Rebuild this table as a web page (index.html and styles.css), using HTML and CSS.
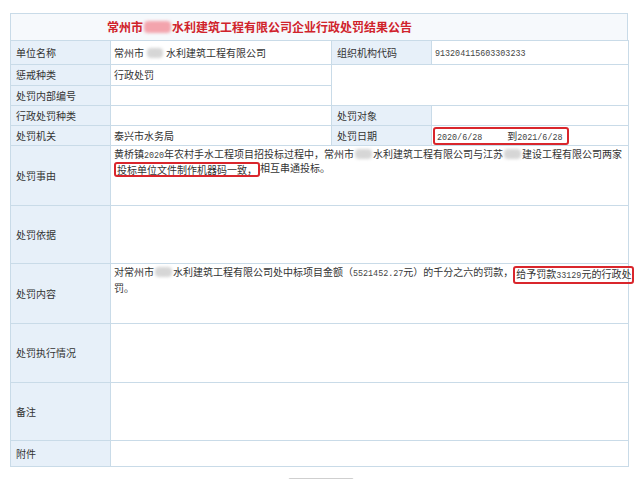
FILE: index.html
```html
<!DOCTYPE html>
<html lang="zh-CN">
<head>
<meta charset="utf-8">
<title>行政处罚结果公告</title>
<link rel="stylesheet" href="styles.css">
</head>
<body>
<div class="page">
  <div class="title">常州市<span class="blur blur-title"></span>水利建筑工程有限公司企业行政处罚结果公告</div>
  <table class="grid">
    <colgroup><col class="c1"><col class="c2"><col class="c3"><col class="c4"></colgroup>
    <tr class="h24">
      <th>单位名称</th>
      <td>常州市<span class="blur blur-s"></span>水利建筑工程有限公司</td>
      <th>组织机构代码</th>
      <td><span class="num">913204115603303233</span></td>
    </tr>
    <tr class="h21">
      <th>惩戒种类</th>
      <td>行政处罚</td>
      <td class="blank" colspan="2" rowspan="2"></td>
    </tr>
    <tr class="h20">
      <th>处罚内部编号</th>
      <td></td>
    </tr>
    <tr class="h20">
      <th>行政处罚种类</th>
      <td></td>
      <th>处罚对象</th>
      <td></td>
    </tr>
    <tr class="h20">
      <th>处罚机关</th>
      <td>泰兴市水务局</td>
      <th>处罚日期</th>
      <td><span class="mark mark-date"><span class="num">2020/6/28</span><span class="gap"></span>到<span class="num">2021/6/28</span></span></td>
    </tr>
    <tr class="h60">
      <th>处罚事由</th>
      <td class="text" colspan="3">黄桥镇<span class="num">2020</span>年农村手水工程项目招投标过程中，常州市<span class="blur blur-m"></span>水利建筑工程有限公司与江苏<span class="blur blur-m"></span>建设工程有限公司两家<br><span class="mark mark-line">投标单位文件制作机器码一致，</span>相互串通投标。</td>
    </tr>
    <tr class="h58">
      <th>处罚依据</th>
      <td class="text" colspan="3"></td>
    </tr>
    <tr class="h60">
      <th>处罚内容</th>
      <td class="text" colspan="3">对常州市<span class="blur blur-m"></span>水利建筑工程有限公司处中标项目金额（<span class="num">5521452.27</span>元）的千分之六的罚款，<span class="mark mark-line">给予罚款<span class="num">33129</span>元的行政处</span><br>罚。</td>
    </tr>
    <tr class="h59">
      <th>处罚执行情况</th>
      <td class="text" colspan="3"></td>
    </tr>
    <tr class="h58">
      <th>备注</th>
      <td class="text" colspan="3"></td>
    </tr>
    <tr class="h26">
      <th>附件</th>
      <td class="text" colspan="3"></td>
    </tr>
  </table>
  <div class="actions"><span class="btn"></span></div>
</div>
</body>
</html>
```

FILE: styles.css
```css
html, body {
  margin: 0;
  padding: 0;
  background: #ffffff;
  overflow: hidden;
}
body {
  font-family: "Noto Sans CJK SC", "Noto Sans", sans-serif;
  font-size: 10px;
  color: #333333;
}
.page {
  padding: 13px 0 0 10px;
  width: 618px;
}
.title {
  box-sizing: border-box;
  height: 27px;
  line-height: 25px;
  border: 1px solid #c9dbe8;
  border-bottom: none;
  background: #f6f9fc;
  padding-left: 96px;
  font-size: 12px;
  font-weight: bold;
  color: #d0232b;
  white-space: nowrap;
}
.grid {
  width: 618px;
  border-collapse: collapse;
  table-layout: fixed;
}
.c1 { width: 100px; }
.c2 { width: 221px; }
.c3 { width: 100px; }
.c4 { width: 197px; }
.grid th,
.grid td {
  border: 1px solid #c9dbe8;
  padding: 0;
  font-weight: normal;
  text-align: left;
  white-space: nowrap;
  overflow: visible;
  line-height: 12px;
}
.grid th {
  background: #e7f0f9;
  padding-left: 5px;
  vertical-align: middle;
  color: #333;
}
.grid td {
  background: #ffffff;
  padding-left: 3px;
  vertical-align: middle;
}
.grid td.text {
  vertical-align: top;
  padding-top: 2px;
  line-height: 12px;
}
.grid td.blank { background: #ffffff; }
.h20 { height: 20px; }
.h21 { height: 21px; }
.h24 { height: 24px; }
.h26 { height: 26px; }
.h58 { height: 58px; }
.h59 { height: 59px; }
.h60 { height: 60px; }
.num {
  font-family: "Liberation Mono", "DejaVu Sans Mono", monospace;
  font-size: 8.4px;
  color: #444;
}
.blur {
  display: inline-block;
  height: 10px;
  vertical-align: -1px;
  background: #d6d6d6;
  border-radius: 4px;
  filter: blur(1.5px);
}
.blur-title {
  width: 27px;
  margin: 0 1px;
  background: #f3a4ad;
  height: 12px;
}
.blur-s { width: 16px; margin: 0 3px; }
.blur-m { width: 17px; margin: 0 1px; }
.mark {
  display: inline-block;
  border: 2px solid #d9262c;
  border-radius: 3px;
  line-height: 11px;
  box-sizing: border-box;
}
.mark-line {
  padding: 0 1px;
  margin: -2px 0;
  vertical-align: -2px;
}
.mark-date {
  height: 18px;
  line-height: 14px;
  padding: 0 2px;
  margin-left: -2px;
  width: 136px;
}
.gap {
  display: inline-block;
  width: 25px;
}
.actions {
  padding: 11px 0 0 278px;
}
.btn {
  display: block;
  width: 64px;
  height: 20px;
  border: 1px solid #cfcfcf;
  border-radius: 2px;
  background: #f6f6f6;
}
```
